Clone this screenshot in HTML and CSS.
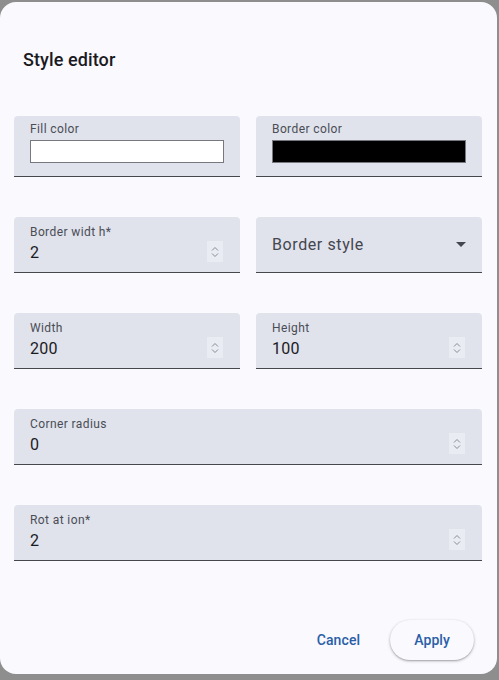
FILE: index.html
```
<!DOCTYPE html>
<html>
<head>
<meta charset="utf-8">
<link rel="stylesheet" href="styles.css">
</head>
<body>
<div class="dialog">
  <h1 class="title">Style editor</h1>
  <div class="fields">
    <div class="field color-field">
      <span class="label">Fill color</span>
      <span class="swatch swatch-white"></span>
    </div>
    <div class="field color-field">
      <span class="label">Border color</span>
      <span class="swatch swatch-black"></span>
    </div>
    <div class="field">
      <div class="text">
        <span class="label">Border widt h*</span>
        <span class="value">2</span>
      </div>
      <span class="spin"><svg viewBox="0 0 16 20" width="16" height="20"><path d="M5 8.5l3-3 3 3M5 11.5l3 3 3-3" fill="none" stroke="#8a8c94" stroke-width="1"/></svg></span>
    </div>
    <div class="field select">
      <span class="placeholder">Border style</span>
      <svg class="arrow" viewBox="0 0 10 5" width="10" height="5"><path d="M0 0h10L5 5z" fill="#44474e"/></svg>
    </div>
    <div class="field">
      <div class="text">
        <span class="label">Width</span>
        <span class="value">200</span>
      </div>
      <span class="spin"><svg viewBox="0 0 16 20" width="16" height="20"><path d="M5 8.5l3-3 3 3M5 11.5l3 3 3-3" fill="none" stroke="#8a8c94" stroke-width="1"/></svg></span>
    </div>
    <div class="field">
      <div class="text">
        <span class="label">Height</span>
        <span class="value">100</span>
      </div>
      <span class="spin"><svg viewBox="0 0 16 20" width="16" height="20"><path d="M5 8.5l3-3 3 3M5 11.5l3 3 3-3" fill="none" stroke="#8a8c94" stroke-width="1"/></svg></span>
    </div>
    <div class="field wide">
      <div class="text">
        <span class="label">Corner radius</span>
        <span class="value">0</span>
      </div>
      <span class="spin"><svg viewBox="0 0 16 20" width="16" height="20"><path d="M5 8.5l3-3 3 3M5 11.5l3 3 3-3" fill="none" stroke="#8a8c94" stroke-width="1"/></svg></span>
    </div>
    <div class="field wide">
      <div class="text">
        <span class="label">Rot at ion*</span>
        <span class="value">2</span>
      </div>
      <span class="spin"><svg viewBox="0 0 16 20" width="16" height="20"><path d="M5 8.5l3-3 3 3M5 11.5l3 3 3-3" fill="none" stroke="#8a8c94" stroke-width="1"/></svg></span>
    </div>
  </div>
  <div class="actions">
    <button class="btn text-btn">Cancel</button>
    <button class="btn elevated">Apply</button>
  </div>
</div>
</body>
</html>
```
FILE: styles.css
```
html, body {
  margin: 0;
  padding: 0;
}
body {
  width: 499px;
  height: 680px;
  overflow: hidden;
  background: #8e8e8e;
  font-family: Roboto, "Liberation Sans", sans-serif;
}
.dialog {
  margin-top: 2px;
  width: 497px;
  height: 672px;
  box-sizing: border-box;
  background: #f9f9fe;
  border-radius: 16px;
  padding: 46px 15px 0 14px;
  display: flex;
  flex-direction: column;
}
.title {
  margin: 0 0 0 9px;
  font-size: 18px;
  line-height: 24px;
  font-weight: 500;
  color: #1b1b1f;
  letter-spacing: 0.1px;
}
.fields {
  margin-top: 44px;
  display: grid;
  grid-template-columns: 226px 226px;
  column-gap: 16px;
  row-gap: 40px;
}
.field {
  background: #e0e2ec;
  border-radius: 4px 4px 0 0;
  border-bottom: 1px solid #44474e;
  height: 55px;
  box-sizing: content-box;
  display: flex;
  align-items: center;
  padding: 0 17px 0 16px;
}
.field.wide {
  grid-column: 1 / span 2;
}
.color-field {
  flex-direction: column;
  align-items: stretch;
  box-sizing: border-box;
  padding-top: 6px;
  height: 61px;
}
.text {
  flex: 1;
  display: flex;
  flex-direction: column;
}
.label {
  font-size: 12px;
  line-height: 14px;
  color: #4a4d55;
  letter-spacing: 0.4px;
}
.value {
  margin-top: 2px;
  font-size: 16px;
  line-height: 24px;
  color: #1b1b1f;
  letter-spacing: 0.2px;
}
.swatch {
  display: block;
  margin-top: 4px;
  width: 194px;
  height: 23px;
  box-sizing: border-box;
  border: 1px solid #76777f;
}
.swatch-white { background: #ffffff; }
.swatch-black { background: #000000; }
.spin {
  display: flex;
  width: 16px;
  height: 21px;
  margin-top: 14px;
  background: #eaecf3;
  align-items: center;
  justify-content: center;
}
.select {
  justify-content: space-between;
}
.placeholder {
  font-size: 16px;
  line-height: 24px;
  color: #44474e;
  letter-spacing: 0.6px;
}
.arrow {
  margin-right: -1px;
}
.actions {
  margin-top: auto;
  margin-bottom: 14px;
  margin-right: 8px;
  display: flex;
  justify-content: flex-end;
  align-items: center;
  gap: 18px;
}
.btn {
  height: 40px;
  border: none;
  border-radius: 20px;
  font-family: Roboto, "Liberation Sans", sans-serif;
  font-size: 14px;
  font-weight: 500;
  color: #2b5ea7;
  background: transparent;
  padding: 0 12px;
  letter-spacing: 0.1px;
}
.elevated {
  background: #f9f9fe;
  padding: 0 24px;
  box-shadow: 0 1px 3px rgba(0, 0, 0, 0.3), 0 1px 1px rgba(0, 0, 0, 0.1);
}
```
